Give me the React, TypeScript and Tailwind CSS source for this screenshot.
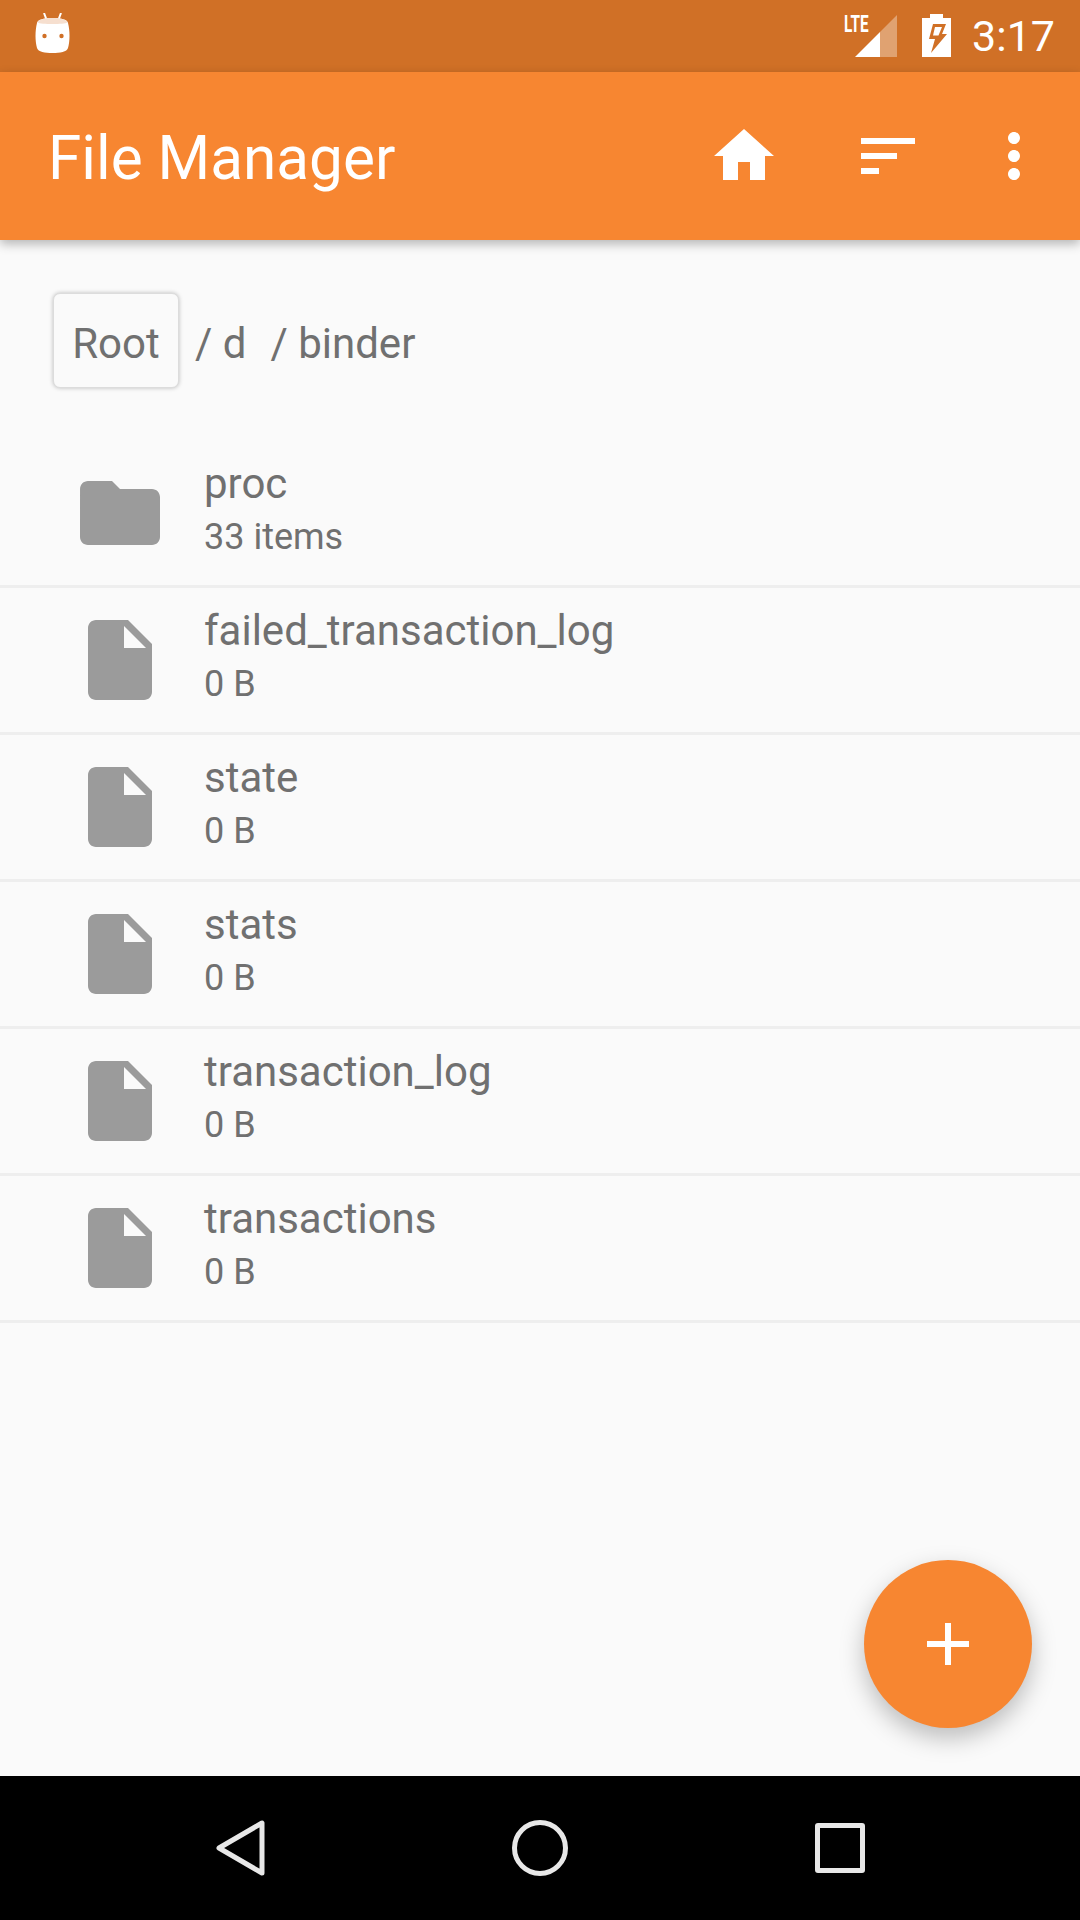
const items = [
  { name: 'failed_transaction_log', meta: '0 B' },
  { name: 'state', meta: '0 B' },
  { name: 'stats', meta: '0 B' },
  { name: 'transaction_log', meta: '0 B' },
  { name: 'transactions', meta: '0 B' },
];

function FolderIcon() {
  return (
    <svg viewBox="0 0 24 24" className="w-24 h-24" fill="#9b9b9b">
      <path d="M10 4H4c-1.1 0-1.99.9-1.99 2L2 18c0 1.1.9 2 2 2h16c1.1 0 2-.9 2-2V8c0-1.1-.9-2-2-2h-8l-2-2z" />
    </svg>
  );
}

function FileIcon() {
  return (
    <svg viewBox="0 0 24 24" className="w-24 h-24" fill="#9b9b9b">
      <path d="M13 9V3.5L18.5 9H13zM6 2c-1.11 0-2 .89-2 2v16c0 1.1.89 2 2 2h12c1.1 0 2-.9 2-2V8l-6-6H6z" />
    </svg>
  );
}

function Row({ name, meta, folder }: { name: string; meta: string; folder?: boolean }) {
  return (
    <div className="h-[147px] flex items-center pl-[72px] border-b-[3px] border-[#eeeeee]">
      {folder ? <FolderIcon /> : <FileIcon />}
      <div className="ml-9 flex flex-col">
        <span className="text-[42px] leading-[50px] mb-[7px] -mt-[9px] text-[#707070]">{name}</span>
        <span className="text-[36px] leading-[42px] text-[#707070]">{meta}</span>
      </div>
    </div>
  );
}

export default function App() {
  return (
    <div className="relative flex flex-col w-[1080px] h-[1920px] overflow-hidden bg-[#fafafa] font-['Roboto',sans-serif]">
      {/* Status bar */}
      <div className="h-[72px] flex items-center bg-[#d07026] text-white">
        <svg viewBox="0 0 37 42" className="ml-[34px] mb-[4px] w-[37px] h-[42px]">
          <path d="M10 0l3 8M27 0l-3 8" stroke="#fff" strokeWidth="2" fill="none" />
          <path d="M3 10c0-3 6-5 15.500-5s15.500 2 15.500 5c2 8 2 18 0 25-1 4-8 5-15.500 5s-14.500-1-15.500-5c-2-7-2-17 0-25z" fill="#fff" />
          <path d="M3.500 9.500c1-3 6-4.500 15-4.500s14 1.500 15 4.500c-3 2-27 2-30 0z" fill="#f6dfcf" />
          <circle cx="10.500" cy="23" r="2.200" fill="#d07026" />
          <circle cx="27.500" cy="23" r="2.200" fill="#d07026" />
        </svg>
        <div className="ml-auto flex items-center">
          <div className="relative w-[53px] h-[44px]">
            <span className="absolute left-0 -top-[2px] text-[24px] leading-[24px] font-bold scale-x-[0.64] origin-left">LTE</span>
            <svg viewBox="0 0 53 44" className="w-[53px] h-[44px]">
              <path d="M53 1V43H36V18z" fill="#fff" fillOpacity="0.35" />
              <path d="M36 18V43H11z" fill="#fff" />
            </svg>
          </div>
          <svg viewBox="0 0 29 44" className="ml-[25px] w-[29px] h-[44px]">
            <path d="M8 0h13v4h8v39H0V4h8z" fill="#fff" />
            <path d="M11 10h13l-4 10h5L9 39l4-14H7z" fill="#d07026" />
            <path d="M13 13h7l-3.500 8.500h-5.500z" fill="#fff" />
          </svg>
          <span className="ml-[21px] mr-[25px] text-[43px] leading-none">3:17</span>
        </div>
      </div>

      {/* Toolbar */}
      <div className="relative h-[168px] flex items-center pl-12 bg-[#f78631] shadow-[0_4px_10px_rgba(0,0,0,0.28)] text-white">
        <span className="text-[60.3px] leading-none pt-[7px]">File Manager</span>
        <svg viewBox="0 0 24 24" className="ml-auto w-[72px] h-[72px]" fill="#fff">
          <path d="M10 20v-6h4v6h5v-8h3L12 3 2 12h3v8z" />
        </svg>
        <svg viewBox="0 0 24 24" className="ml-[72px] w-[72px] h-[72px]" fill="#fff">
          <path d="M3 18h6v-2H3v2zM3 6v2h18V6H3zm0 7h12v-2H3v2z" />
        </svg>
        <svg viewBox="0 0 24 24" className="ml-[54px] mr-[30px] w-[72px] h-[72px]" fill="#fff">
          <path d="M12 8c1.100 0 2-.9 2-2s-.9-2-2-2-2 .9-2 2 .9 2 2 2zm0 2c-1.100 0-2 .9-2 2s.9 2 2 2 2-.9 2-2-.9-2-2-2zm0 6c-1.100 0-2 .9-2 2s.9 2 2 2 2-.9 2-2-.9-2-2-2z" />
        </svg>
      </div>

      {/* Breadcrumbs */}
      <div className="h-[201px] flex items-start pt-[53px] pl-[53px] text-[42px] text-[#707070]">
        <div className="w-[126px] h-[95px] flex items-center justify-center rounded-[7px] bg-[#fafafa] border border-[#dcdcdc] shadow-[0_0_4px_rgba(0,0,0,0.25)] pt-[5px]">
          Root
        </div>
        <span className="ml-4 leading-[101px]">/ d</span>
        <span className="ml-6 leading-[101px]">/ binder</span>
      </div>

      {/* File list */}
      <div className="flex flex-col flex-1">
        <Row name="proc" meta="33 items" folder />
        {items.map((item) => (
          <Row key={item.name} name={item.name} meta={item.meta} />
        ))}
      </div>

      {/* FAB */}
      <div className="absolute left-[864px] top-[1560px] w-[168px] h-[168px] flex items-center justify-center rounded-full bg-[#f78631] shadow-[0_10px_24px_rgba(0,0,0,0.25)]">
        <svg viewBox="0 0 42 42" className="w-[42px] h-[42px]" fill="#fff">
          <path d="M18 0h6v18h18v6H24v18h-6V24H0v-6h18z" />
        </svg>
      </div>

      {/* Nav bar */}
      <div className="h-[144px] flex items-center bg-black">
        <svg viewBox="0 0 50 56" className="ml-[216px] w-[50px] h-[56px]" fill="none" stroke="#e8e8e8" strokeWidth="5" strokeLinejoin="round">
          <path d="M46 3v50L3 28z" />
        </svg>
        <div className="ml-[246px] w-[56px] h-[56px] rounded-full border-[5px] border-[#e8e8e8]" />
        <div className="ml-[247px] w-[50px] h-[50px] rounded-[3px] border-[5px] border-[#e8e8e8]" />
      </div>
    </div>
  );
}
